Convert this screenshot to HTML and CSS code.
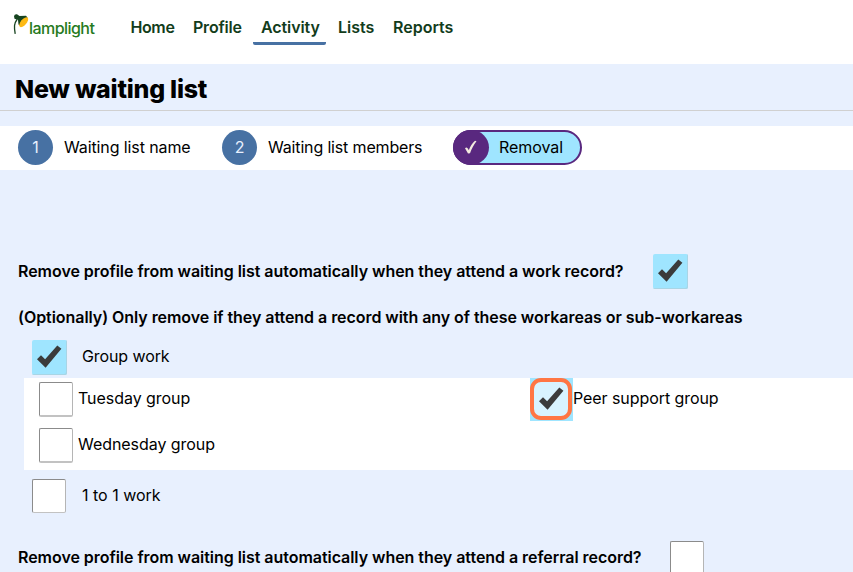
FILE: index.html
```html
<!DOCTYPE html>
<html lang="en">
<head>
<meta charset="utf-8">
<title>New waiting list</title>
<link rel="stylesheet" href="styles.css">
</head>
<body>
<svg class="defs" width="0" height="0">
  <symbol id="tick" viewBox="0 0 35 35"><path d="M5 19.3 9 15.2 13.1 19.3 25.3 5.4 29.4 8.8 13.6 27.8Z" fill="#3b3b3b"/></symbol>
</svg>
<header class="topbar">
  <a class="logo">
    <svg class="lamp" width="16" height="21" viewBox="0 0 16 21">
      <path d="M4 5.500C1 9.500 1 13 2.200 19.800" fill="none" stroke="#174420" stroke-width="1.300"/>
      <path d="M1 2.300Q1.500-.2 4 .3L6.500 1.900 13 1.800 14.500 3.500 7.500 12 5.500 10.500 5 6 1.500 4.700Z" fill="#174420"/>
      <ellipse cx="10.700" cy="8.200" rx="6" ry="2.900" transform="rotate(-50 10.700 8.200)" fill="#fdb913"/>
    </svg><span class="wordmark">lamplight</span>
  </a>
  <nav class="menu">
    <a class="home">Home</a>
    <a class="profile">Profile</a>
    <a class="activity current">Activity</a>
    <a class="lists">Lists</a>
    <a class="reports">Reports</a>
  </nav>
</header>
<h1>New waiting list</h1>
<ol class="steps">
  <li class="step name"><b>1</b><span>Waiting list name</span></li>
  <li class="step members"><b>2</b><span>Waiting list members</span></li>
  <li class="step active"><b><svg width="35" height="31" viewBox="0 0 35 31"><path d="M12 16.200C13.500 15 14.500 15.500 15.800 18.300 17.200 14.500 19.200 11.300 22 8.800L23.500 9.300C20.700 13 18.600 17 17 21.300L15 21.600Z" fill="#f3eadf"/></svg></b><span>Removal</span></li>
</ol>
<main>
  <div class="question work"><label>Remove profile from waiting list automatically when they attend a work record?</label><i class="box checked"><svg><use href="#tick"/></svg></i></div>
  <h2>(Optionally) Only remove if they attend a record with any of these workareas or sub-workareas</h2>
  <div class="area group"><i class="box checked"><svg><use href="#tick"/></svg></i><span>Group work</span></div>
  <div class="subareas">
    <div class="sub tuesday"><i class="box"></i><span>Tuesday group</span></div>
    <div class="sub peer"><i class="box focused"><svg><use href="#tick"/></svg></i><span>Peer support group</span></div>
    <div class="sub wednesday"><i class="box"></i><span>Wednesday group</span></div>
  </div>
  <div class="area single"><i class="box"></i><span>1 to 1 work</span></div>
  <div class="question referral"><label>Remove profile from waiting list automatically when they attend a referral record?</label><i class="box"></i></div>
</main>
</body>
</html>
```
FILE: styles.css
```css
*, *::before { box-sizing: border-box; }
html { overflow: hidden; }
body {
  margin: 0;
  height: 572px;
  overflow: hidden;
  background: #e8f0fe;
  color: #000;
  font: 16px/24px Inter, "Liberation Sans", sans-serif;
  white-space: nowrap;
}
.defs { display: block; }
.topbar { display: flex; height: 64px; background: #fff; }
.logo { display: flex; width: 117.500px; margin-left: 13px; padding-top: 14px; }
.lamp { flex: none; }
.wordmark { margin-top: 2px; color: #267a20; font-weight: 500; letter-spacing: -.55px; }
.menu { display: flex; color: #123c1b; font-weight: 600; height: 45px; padding-top: 15px; }
.menu a { height: 30px; }
.home { width: 62.500px; letter-spacing: -.4px; }
.profile { width: 60px; letter-spacing: -.2px; }
.activity { width: 73px; padding-left: 8px; margin-right: 12px; letter-spacing: -.1px; }
.current { border-bottom: 3px solid #4771a3; border-radius: 0 0 2px 2px; }
.lists { width: 55px; }
h1 {
  height: 47px;
  margin: 0 0 15px;
  padding: 9px 15px 0;
  border-bottom: 1px solid #d0d0d0;
  font-size: 25px;
  line-height: 32px;
  font-weight: 800;
  letter-spacing: -.25px;
}
.steps { display: flex; height: 44px; margin: 0; padding: 4px 18px; background: #fff; list-style: none; }
.step { display: flex; height: 35px; line-height: 35px; }
.step b { width: 35px; margin-right: 11px; border-radius: 50%; background: #4771a3; color: #e8f0fe; font-weight: 400; text-align: center; }
.name { width: 204px; letter-spacing: -.11px; }
.members { width: 231px; letter-spacing: -.16px; }
.step.active { width: 129px; border: 2px solid #59287f; border-radius: 18px; background: #9fe5ff; line-height: 31px; letter-spacing: -.05px; }
.step.active b { width: 36px; height: 35px; margin: -2px 10px 0 -2px; background: #59287f; }
.active svg { display: block; margin-top: 2px; }
.box { display: block; flex: none; width: 34px; height: 35px; border: 1px solid #8b8b8b; border-right-color: #b5b5b5; border-bottom: 2px solid #c2c2c2; border-radius: 2px; background: #fff; }
.box svg { display: block; width: 35px; height: 35px; }
.checked { width: 35px; border: 0; background: #9fe5ff; box-shadow: inset -1px -1px #a9d5e5; }
main { padding-top: 84px; }
.question { display: flex; height: 35px; margin-left: 18px; font-weight: 600; line-height: 34px; letter-spacing: -.042px; }
.question label { flex: none; width: 635px; }
h2 { height: 24px; margin: 16px 0 11px 18px; font-size: 16px; font-weight: 600; line-height: 24px; letter-spacing: -.052px; }
.area { display: flex; height: 35px; margin-left: 32px; line-height: 33px; }
.area span { margin-left: 15px; }
.subareas { display: grid; grid-template-columns: 506px 1fr; grid-auto-rows: 46px; height: 92px; margin: 3px 0 9px 24px; background: #fff; }
.sub { display: flex; padding: 4px 0 0 15px; line-height: 33px; }
.sub span { margin-left: 5px; letter-spacing: -.05px; }
.sub.peer { padding: 0; line-height: 41px; }
.sub.peer span { margin-left: 0; letter-spacing: -.07px; }
.focused { width: 43px; height: 43px; border: 0; border-radius: 0; background: #9fe5ff; position: relative; padding: 4px; }
.focused::before { content: ""; position: absolute; left: 0; top: 0; width: 42px; height: 42px; border: 4px solid #ff7644; border-radius: 11px; background: #d8f3ff; }
.focused svg { position: relative; }
.single { height: 35px; }
.single .box { height: 34px; border-bottom-width: 1px; }
.single span { margin-left: 16px; }
.group span { letter-spacing: -.1px; }
.referral { margin-top: 27px; line-height: 32px; }
.referral label { width: 652px; }
```
